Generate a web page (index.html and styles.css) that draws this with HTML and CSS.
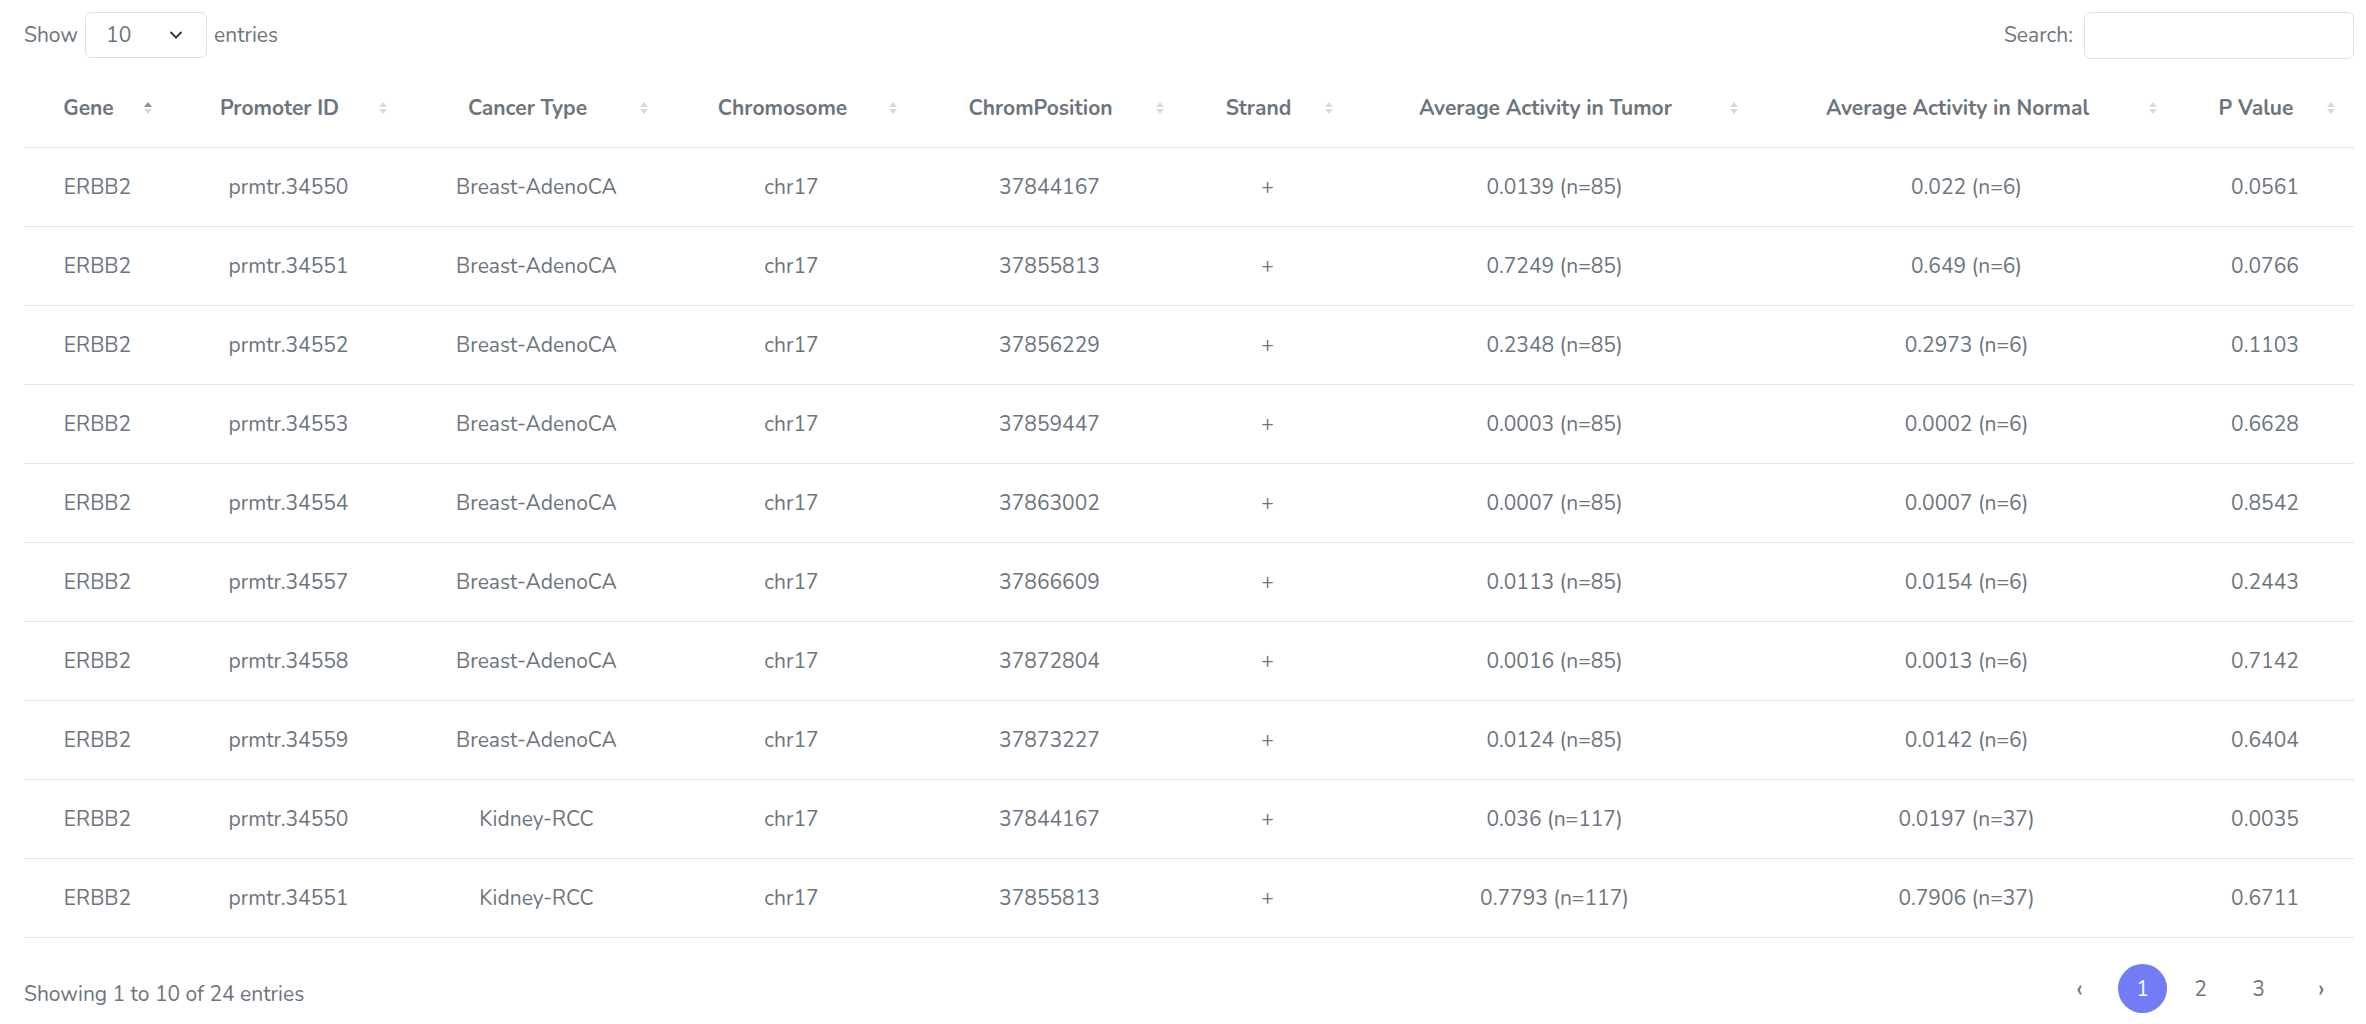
FILE: index.html
```html
<!DOCTYPE html>
<html>
<head>
<meta charset="utf-8">
<link rel="stylesheet" href="styles.css">
</head>
<body>
<div class="wrap">
  <div class="top">
    <label class="length">Show
      <span class="select"><span class="sel-val">10</span>
        <svg class="chev" width="14" height="10" viewBox="0 0 14 10"><path d="M2 2.5 L7 7.5 L12 2.5" fill="none" stroke="#343a40" stroke-width="2" stroke-linecap="round" stroke-linejoin="round"/></svg>
      </span>
    entries</label>
    <label class="search">Search: <span class="input"></span></label>
  </div>
  <table class="tbl">
    <colgroup>
      <col class="c1"><col class="c2"><col class="c3"><col class="c4"><col class="c5"><col class="c6"><col class="c7"><col class="c8"><col class="c9">
    </colgroup>
    <thead>
      <tr>
        <th class="asc">Gene</th>
        <th>Promoter ID</th>
        <th>Cancer Type</th>
        <th>Chromosome</th>
        <th>ChromPosition</th>
        <th>Strand</th>
        <th>Average Activity in Tumor</th>
        <th>Average Activity in Normal</th>
        <th>P Value</th>
      </tr>
    </thead>
    <tbody>
      <tr><td>ERBB2</td><td>prmtr.34550</td><td>Breast-AdenoCA</td><td>chr17</td><td>37844167</td><td>+</td><td>0.0139 (n=85)</td><td>0.022 (n=6)</td><td>0.0561</td></tr>
      <tr><td>ERBB2</td><td>prmtr.34551</td><td>Breast-AdenoCA</td><td>chr17</td><td>37855813</td><td>+</td><td>0.7249 (n=85)</td><td>0.649 (n=6)</td><td>0.0766</td></tr>
      <tr><td>ERBB2</td><td>prmtr.34552</td><td>Breast-AdenoCA</td><td>chr17</td><td>37856229</td><td>+</td><td>0.2348 (n=85)</td><td>0.2973 (n=6)</td><td>0.1103</td></tr>
      <tr><td>ERBB2</td><td>prmtr.34553</td><td>Breast-AdenoCA</td><td>chr17</td><td>37859447</td><td>+</td><td>0.0003 (n=85)</td><td>0.0002 (n=6)</td><td>0.6628</td></tr>
      <tr><td>ERBB2</td><td>prmtr.34554</td><td>Breast-AdenoCA</td><td>chr17</td><td>37863002</td><td>+</td><td>0.0007 (n=85)</td><td>0.0007 (n=6)</td><td>0.8542</td></tr>
      <tr><td>ERBB2</td><td>prmtr.34557</td><td>Breast-AdenoCA</td><td>chr17</td><td>37866609</td><td>+</td><td>0.0113 (n=85)</td><td>0.0154 (n=6)</td><td>0.2443</td></tr>
      <tr><td>ERBB2</td><td>prmtr.34558</td><td>Breast-AdenoCA</td><td>chr17</td><td>37872804</td><td>+</td><td>0.0016 (n=85)</td><td>0.0013 (n=6)</td><td>0.7142</td></tr>
      <tr><td>ERBB2</td><td>prmtr.34559</td><td>Breast-AdenoCA</td><td>chr17</td><td>37873227</td><td>+</td><td>0.0124 (n=85)</td><td>0.0142 (n=6)</td><td>0.6404</td></tr>
      <tr><td>ERBB2</td><td>prmtr.34550</td><td>Kidney-RCC</td><td>chr17</td><td>37844167</td><td>+</td><td>0.036 (n=117)</td><td>0.0197 (n=37)</td><td>0.0035</td></tr>
      <tr><td>ERBB2</td><td>prmtr.34551</td><td>Kidney-RCC</td><td>chr17</td><td>37855813</td><td>+</td><td>0.7793 (n=117)</td><td>0.7906 (n=37)</td><td>0.6711</td></tr>
    </tbody>
  </table>
  <div class="foot">
    <div class="info">Showing 1 to 10 of 24 entries</div>
    <div class="pager">
      <span class="pg nav">&#8249;</span>
      <span class="pg active">1</span>
      <span class="pg">2</span>
      <span class="pg">3</span>
      <span class="pg nav">&#8250;</span>
    </div>
  </div>
</div>
</body>
</html>
```
FILE: styles.css
```css
html, body {
  margin: 0;
  padding: 0;
  background: #ffffff;
}
body {
  font-family: "Nunito", "Lato", "Noto Sans", sans-serif;
  font-size: 21px;
  color: #6c757d;
}
.wrap {
  padding: 12px 12px 0 24px;
}
.top {
  display: flex;
  justify-content: space-between;
  align-items: center;
  height: 46px;
}
.length, .search {
  display: flex;
  align-items: center;
  gap: 7px;
}
.select {
  display: flex;
  align-items: center;
  justify-content: space-between;
  box-sizing: border-box;
  width: 122px;
  height: 46px;
  padding: 0 23px 0 20px;
  border: 1px solid #dee2e6;
  border-radius: 6px;
  color: #6c757d;
}
.input {
  display: block;
  box-sizing: border-box;
  width: 270px;
  height: 47px;
  border: 1px solid #dee2e6;
  border-radius: 6px;
  margin-left: 4px;
}
.tbl {
  width: 2330px;
  table-layout: fixed;
  border-collapse: collapse;
  margin-top: 10px;
}
.c1 { width: 147px; }
.c2 { width: 235px; }
.c3 { width: 261px; }
.c4 { width: 249px; }
.c5 { width: 267px; }
.c6 { width: 169px; }
.c7 { width: 405px; }
.c8 { width: 419px; }
.c9 { width: 178px; }
.tbl th {
  position: relative;
  height: 79px;
  padding: 0 30px 0 12px;
  font-weight: 700;
  color: #6c757d;
  text-align: center;
  border-bottom: 1px solid #e3e6ea;
  white-space: nowrap;
}
.tbl th::before, .tbl th::after {
  content: "";
  position: absolute;
  right: 19px;
  width: 0;
  height: 0;
  border-left: 4.5px solid transparent;
  border-right: 4.5px solid transparent;
}
.tbl th::before {
  top: 34px;
  border-bottom: 5px solid #d6dadf;
}
.tbl th::after {
  top: 41px;
  border-top: 5px solid #d6dadf;
}
.tbl th.asc::before {
  border-bottom-color: #8a949c;
}
.tbl td {
  height: 78px;
  padding: 0 12px;
  text-align: center;
  border-bottom: 1px solid #e3e6ea;
  white-space: nowrap;
}
.foot {
  display: flex;
  justify-content: space-between;
  align-items: center;
  margin-top: 26px;
}
.info {
  margin-top: 10px;
}
.pager {
  display: flex;
  align-items: center;
  gap: 9px;
  margin-right: 3px;
}
.pg {
  width: 49px;
  height: 49px;
  border-radius: 50%;
  display: flex;
  align-items: center;
  justify-content: center;
  color: #6c757d;
}
.pg.nav {
  font-size: 26px;
  margin: 0 5px;
}
.pg.active {
  background: #727cf5;
  color: #ffffff;
}
```
